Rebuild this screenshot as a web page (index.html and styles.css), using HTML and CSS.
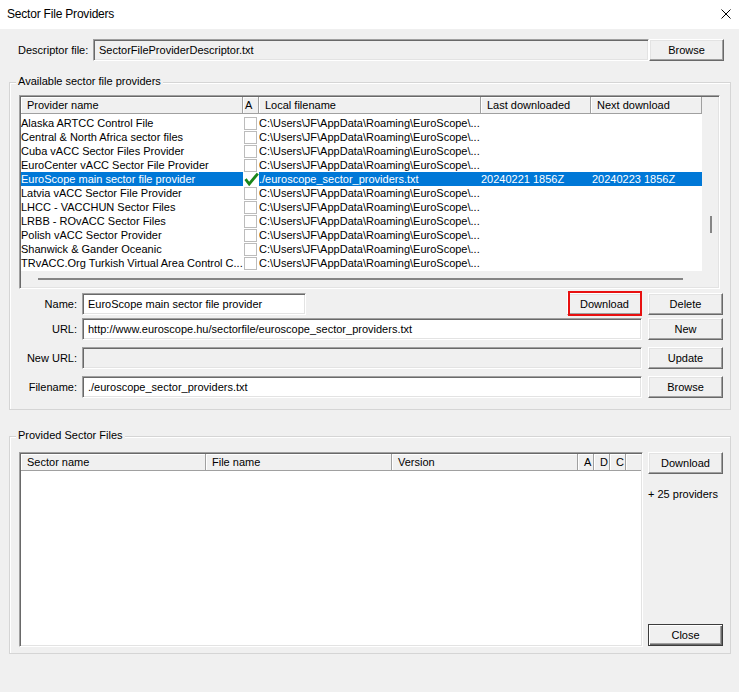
FILE: index.html
```html
<!DOCTYPE html>
<html>
<head>
<meta charset="utf-8">
<title>Sector File Providers</title>
<link rel="stylesheet" href="styles.css">
</head>
<body>
<div class="window">
  <div class="titlebar">
    <span class="title">Sector File Providers</span>
    <svg class="close-x" width="10" height="10" viewBox="0 0 10 10"><path d="M0.5 0.5L9.5 9.5M9.5 0.5L0.5 9.5" stroke="#000" stroke-width="1" fill="none"/></svg>
  </div>
  <div class="client">
    <div class="desc-row">
      <span class="desc-label">Descriptor file:</span>
      <div class="edit readonly desc-edit">SectorFileProviderDescriptor.txt</div>
      <button class="btn desc-browse">Browse</button>
    </div>

    <div class="group group1">
      <div class="legend">Available sector file providers</div>
      <div class="listview lv1">
        <div class="lv-main">
          <div class="lv-header cols1">
            <div class="hcell">Provider name</div>
            <div class="hcell hnarrow">A</div>
            <div class="hcell">Local filename</div>
            <div class="hcell">Last downloaded</div>
            <div class="hcell">Next download</div>
          </div>
          <div class="lv-body lv1-body">
            <div class="row cols1"><div class="c-name">Alaska ARTCC Control File</div><div class="c-a"><span class="cb"></span></div><div class="c-local">C:\Users\JF\AppData\Roaming\EuroScope\...</div><div class="c-last"></div><div class="c-next"></div></div>
            <div class="row cols1"><div class="c-name">Central &amp; North Africa sector files</div><div class="c-a"><span class="cb"></span></div><div class="c-local">C:\Users\JF\AppData\Roaming\EuroScope\...</div><div class="c-last"></div><div class="c-next"></div></div>
            <div class="row cols1"><div class="c-name">Cuba vACC Sector Files Provider</div><div class="c-a"><span class="cb"></span></div><div class="c-local">C:\Users\JF\AppData\Roaming\EuroScope\...</div><div class="c-last"></div><div class="c-next"></div></div>
            <div class="row cols1"><div class="c-name">EuroCenter vACC Sector File Provider</div><div class="c-a"><span class="cb"></span></div><div class="c-local">C:\Users\JF\AppData\Roaming\EuroScope\...</div><div class="c-last"></div><div class="c-next"></div></div>
            <div class="row cols1 sel"><div class="c-name">EuroScope main sector file provider</div><div class="c-a"><svg class="check" width="15" height="14" viewBox="0 0 15 14"><path d="M1.5 7.2L5.2 12L13.8 1.6" stroke="#1b861b" stroke-width="2.8" fill="none" stroke-linecap="butt" stroke-linejoin="miter"/></svg></div><div class="c-local">./euroscope_sector_providers.txt</div><div class="c-last">20240221 1856Z</div><div class="c-next">20240223 1856Z</div></div>
            <div class="row cols1"><div class="c-name">Latvia vACC Sector File Provider</div><div class="c-a"><span class="cb"></span></div><div class="c-local">C:\Users\JF\AppData\Roaming\EuroScope\...</div><div class="c-last"></div><div class="c-next"></div></div>
            <div class="row cols1"><div class="c-name">LHCC - VACCHUN Sector Files</div><div class="c-a"><span class="cb"></span></div><div class="c-local">C:\Users\JF\AppData\Roaming\EuroScope\...</div><div class="c-last"></div><div class="c-next"></div></div>
            <div class="row cols1"><div class="c-name">LRBB - ROvACC Sector Files</div><div class="c-a"><span class="cb"></span></div><div class="c-local">C:\Users\JF\AppData\Roaming\EuroScope\...</div><div class="c-last"></div><div class="c-next"></div></div>
            <div class="row cols1"><div class="c-name">Polish vACC Sector Provider</div><div class="c-a"><span class="cb"></span></div><div class="c-local">C:\Users\JF\AppData\Roaming\EuroScope\...</div><div class="c-last"></div><div class="c-next"></div></div>
            <div class="row cols1"><div class="c-name">Shanwick &amp; Gander Oceanic</div><div class="c-a"><span class="cb"></span></div><div class="c-local">C:\Users\JF\AppData\Roaming\EuroScope\...</div><div class="c-last"></div><div class="c-next"></div></div>
            <div class="row cols1"><div class="c-name">TRvACC.Org Turkish Virtual Area Control C...</div><div class="c-a"><span class="cb"></span></div><div class="c-local">C:\Users\JF\AppData\Roaming\EuroScope\...</div><div class="c-last"></div><div class="c-next"></div></div>
          </div>
          <div class="hscroll"><div class="hthumb"></div></div>
        </div>
        <div class="vscroll"><div class="vthumb"></div></div>
      </div>

      <div class="form-row r-name">
        <span class="f-label">Name:</span>
        <div class="f-field">
          <div class="edit name-edit">EuroScope main sector file provider</div>
          <button class="btn btn-focus">Download</button>
        </div>
        <button class="btn">Delete</button>
      </div>
      <div class="form-row r-url">
        <span class="f-label">URL:</span>
        <div class="edit">http://www.euroscope.hu/sectorfile/euroscope_sector_providers.txt</div>
        <button class="btn">New</button>
      </div>
      <div class="form-row r-newurl">
        <span class="f-label">New URL:</span>
        <div class="edit disabled"></div>
        <button class="btn">Update</button>
      </div>
      <div class="form-row r-file">
        <span class="f-label">Filename:</span>
        <div class="edit">./euroscope_sector_providers.txt</div>
        <button class="btn">Browse</button>
      </div>
    </div>

    <div class="group group2">
      <div class="legend">Provided Sector Files</div>
      <div class="g2-content">
        <div class="listview lv2">
          <div class="lv-main">
            <div class="lv-header cols2">
              <div class="hcell">Sector name</div>
              <div class="hcell">File name</div>
              <div class="hcell">Version</div>
              <div class="hcell">A</div>
              <div class="hcell">D</div>
              <div class="hcell">C</div>
              <div class="hcell hlast"></div>
            </div>
            <div class="lv-body lv2-body"></div>
          </div>
        </div>
        <div class="side">
          <button class="btn">Download</button>
          <div class="providers">+ 25 providers</div>
          <button class="btn btn-default">Close</button>
        </div>
      </div>
    </div>
  </div>
</div>
</body>
</html>
```

FILE: styles.css
```css
* { box-sizing: border-box; }

body {
  margin: 0;
  background: #f0f0f0;
  font-family: "Liberation Sans", Arial, sans-serif;
  font-size: 11px;
  color: #000;
}

.window {
  width: 739px;
  height: 692px;
  overflow: hidden;
  background: #f0f0f0;
}

.titlebar {
  height: 29px;
  background: #fff;
  display: flex;
  align-items: center;
  justify-content: space-between;
  padding: 0 8px 2px 7px;
}

.title {
  font-size: 12px;
  letter-spacing: -0.2px;
}

.close-x { display: block; }

.client { padding: 0; }

/* descriptor row */
.desc-row {
  display: flex;
  align-items: center;
  height: 22px;
  margin-top: 10px;
  padding-left: 18px;
}
.desc-label { width: 75px; white-space: nowrap; }
.desc-edit { width: 556px; }
.desc-browse { margin-left: 6px; width: 75px; }

/* generic controls */
.edit {
  height: 22px;
  background: #fff;
  border: 1px solid;
  border-color: #a0a0a0 #fff #fff #a0a0a0;
  box-shadow: inset 1px 1px 0 #696969, inset -1px -1px 0 #e3e3e3;
  padding: 0 5px;
  line-height: 20px;
  white-space: nowrap;
  overflow: hidden;
}
.edit.readonly, .edit.disabled { background: #f0f0f0; }

.btn {
  width: 75px;
  height: 22px;
  padding: 0;
  margin: 0;
  font-family: inherit;
  font-size: 11px;
  color: #000;
  background: #f0f0f0;
  border: 1px solid;
  border-color: #fff #696969 #696969 #fff;
  box-shadow: inset -1px -1px 0 #a0a0a0, inset 1px 1px 0 #e3e3e3;
  border-radius: 0;
  line-height: 18px;
  position: relative;
}

.btn-focus::after {
  content: "";
  position: absolute;
  top: -3px;
  bottom: -2px;
  left: 0;
  right: -1px;
  border: 2px solid #e81010;
}

.btn-default {
  border: 1px solid #3c3c3c;
  box-shadow: inset 1px 1px 0 #fff, inset -1px -1px 0 #696969, inset -2px -2px 0 #a0a0a0;
}

/* group boxes */
.group {
  position: relative;
  margin-left: 9px;
  width: 722px;
  border: 1px solid #d5d5d5;
  box-shadow: inset 1px 1px 0 #fff;
}
.legend {
  position: absolute;
  top: -8px;
  left: 6px;
  padding: 0 2px;
  line-height: 13px;
  background: #f0f0f0;
  white-space: nowrap;
}

.group1 {
  margin-top: 21px;
  height: 328px;
  padding: 12px 0 0 9px;
}
.group2 {
  margin-top: 26px;
  height: 218px;
  padding: 15px 0 0 9px;
}

/* list views */
.listview {
  display: flex;
  background: #f0f0f0;
  border: 1px solid;
  border-color: #a0a0a0 #fff #fff #a0a0a0;
  box-shadow: inset 1px 1px 0 #696969, inset -1px -1px 0 #e3e3e3;
  padding: 1px;
}
.lv1 { width: 701px; height: 194px; }
.lv2 { width: 624px; height: 195px; }

.lv-main {
  display: flex;
  flex-direction: column;
  flex: 1;
  min-width: 0;
}
.lv1 .lv-main { flex: 0 0 681px; }

.lv-header {
  display: grid;
  height: 17px;
  background: #f0f0f0;
  border-bottom: 1px solid #a0a0a0;
}
.cols1 { grid-template-columns: 222px 16px 222px 110px 111px; }
.cols2 { grid-template-columns: 185px 186px 186px 16px 16px 16px 1fr; }

.hcell {
  border-right: 1px solid #a0a0a0;
  box-shadow: inset 1px 1px 0 #fff;
  padding-left: 6px;
  line-height: 17px;
  white-space: nowrap;
  overflow: hidden;
}
.hcell.hnarrow { padding-left: 2px; }
.hcell.hlast { border-right: none; }

.lv-body { background: #fff; }
.lv1-body { height: 157px; padding-top: 2px; }
.lv2-body { flex: 1; }

.row {
  display: grid;
  height: 14px;
  line-height: 14px;
  white-space: nowrap;
}
.row > div { overflow: hidden; }
.c-a { padding: 1px 0 0 1px; }
.c-next { padding-left: 1px; }

.cb {
  display: block;
  width: 13px;
  height: 13px;
  border: 1px solid #bcbcbc;
  background: #fff;
}
.check { display: block; margin: -1px 0 0 0; }

.row.sel .c-name,
.row.sel .c-local,
.row.sel .c-last,
.row.sel .c-next {
  background: #0078d7;
  color: #fff;
}
.row.sel .c-a { background: #fff; }

.hscroll {
  height: 16px;
  background: #f0f0f0;
  padding: 7px 0 0 17px;
}
.hthumb { width: 645px; height: 2px; background: #858585; }

.vscroll {
  width: 16px;
  background: #f0f0f0;
  padding: 119px 0 0 8px;
}
.vthumb { width: 2px; height: 17px; background: #858585; }

/* form rows */
.form-row {
  display: grid;
  grid-template-columns: 58px 560px 75px;
  column-gap: 5px;
  height: 22px;
  align-items: center;
}
.form-row > .btn { margin-left: 1px; }
.r-name { margin-top: 4px; }
.r-url { margin-top: 3px; }
.r-newurl { margin-top: 7px; }
.r-file { margin-top: 7px; }

.f-label { text-align: right; white-space: nowrap; }
.f-field { display: flex; justify-content: space-between; height: 22px; }
.name-edit { width: 224px; }

/* group 2 */
.g2-content { display: flex; }
.side {
  display: flex;
  flex-direction: column;
  margin-left: 5px;
  width: 75px;
  height: 195px;
}
.providers {
  margin-top: 14px;
  line-height: 13px;
  white-space: nowrap;
}
.side .btn-default { margin-top: auto; margin-bottom: 1px; }
```
